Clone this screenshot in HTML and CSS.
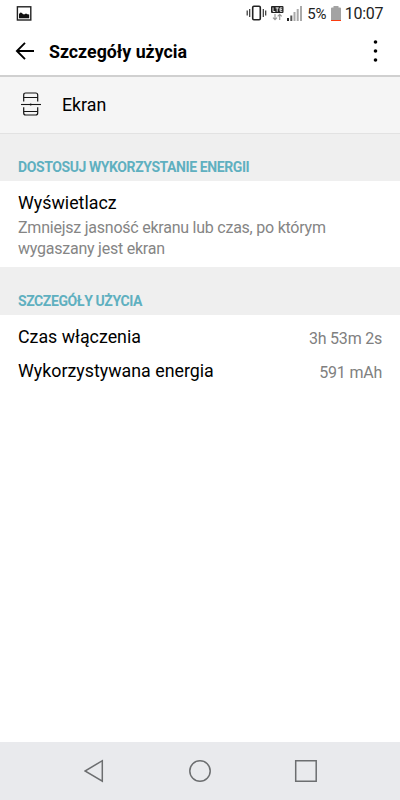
FILE: index.html
```html
<!DOCTYPE html>
<html lang="pl">
<head>
<meta charset="utf-8">
<title>Szczegóły użycia</title>
<link rel="stylesheet" href="styles.css">
</head>
<body>
<div class="screen">
  <div class="status">
    <svg class="picture" width="16" height="16" viewBox="0 0 16 16"><rect x="1.400" y=".8" width="13.400" height="13.200" fill="none" stroke="#222" stroke-width="1.400"/><path d="M3 12.200V8L4.500 6.500l1 .3L7 8l1 .5 2-1 1.500.8 1.700.3v3.600z" fill="#111"/></svg>
    <div class="indicators">
      <svg class="indicator-icons" width="58" height="20" viewBox="0 0 58 20">
        <rect x="6.700" y="5.200" width="7.600" height="13.600" rx="1.200" fill="none" stroke="#222" stroke-width="1.600"/>
        <path d="M1.200 9.500v5M3.700 8v8M17.300 8v8M19.700 9.500v5" stroke="#333" stroke-width="1.200"/>
        <rect x="25" y="5" width="12.500" height="7" rx="1" fill="#222"/>
        <path d="M27 6.500v4h2.300M29.600 6.900h3.200M31.200 6.700v4.100M36.300 6.900h-2.200v3.400h2.200M34.300 8.600h1.800" stroke="#fff" stroke-width=".9" fill="none"/>
        <path d="M29 13v5.500M27 16.700l2 2 2-2M33.700 19v-5.500M31.700 15.300l2-2 2 2" stroke="#999" stroke-width="1.200" fill="none"/>
        <path d="M41 17h2v3h-2z" fill="#222"/><path d="M44.300 14.500h2V20h-2z" fill="#555"/><path d="M47.500 11h2v9h-2z" fill="#aaa"/><path d="M50.700 8h2v12h-2z" fill="#aaa"/><path d="M54 5h2v15h-2z" fill="#aaa"/>
      </svg>
      <span class="percent">5%</span>
      <svg class="battery" width="10" height="16" viewBox="0 0 10 16"><path d="M0 2.500q0-1 1-1h1.500V0h5v1.500H9q1 0 1 1V14H0z" fill="#a3a3a3"/><path d="M0 14h10v1H0z" fill="#fa3c10"/></svg>
      <span class="clock">10:07</span>
    </div>
  </div>
  <header class="bar">
    <svg class="back" width="20" height="20" viewBox="0 0 20 20"><path d="M10 1.900 1.900 10 10 18.100M2 10h17" fill="none" stroke="#000" stroke-width="1.900"/></svg>
    <h1>Szczegóły użycia</h1>
    <svg class="more" width="5" height="24" viewBox="0 0 5 24"><circle cx="2.500" cy="3" r="1.800"/><circle cx="2.500" cy="12" r="1.800"/><circle cx="2.500" cy="21" r="1.800"/></svg>
  </header>
  <div class="component">
    <svg width="22" height="24" viewBox="0 0 22 24" fill="none" stroke="#151515" stroke-width="1.200"><path d="M3.700 9.500V3q0-2 2-2h10q2 0 2 2v6.500M3.700 15.300V21q0 2 2 2h10q2 0 2-2v-5.700"/><path d="M3.700 5.500h14M3.700 19.500h14" stroke-width="1"/><path d="M1 12.500h20" stroke-width="1.100"/><circle cx="10.700" cy="12.500" r="1" fill="#151515" stroke="none"/></svg>
    <span>Ekran</span>
  </div>
  <h2 class="section first"><span>DOSTOSUJ WYKORZYSTANIE ENERGII</span></h2>
  <div class="display">
    <div class="label">Wyświetlacz</div>
    <p>Zmniejsz jasność ekranu lub czas, po którym<br>wygaszany jest ekran</p>
  </div>
  <h2 class="section"><span>SZCZEGÓŁY UŻYCIA</span></h2>
  <div class="details">
    <div class="row"><span class="label">Czas włączenia</span><span class="value">3h 53m 2s</span></div>
    <div class="row"><span class="label">Wykorzystywana energia</span><span class="value">591 mAh</span></div>
  </div>
  <nav class="nav">
    <svg width="20" height="24" viewBox="0 0 20 24"><path d="M18.300 1.700v20.500L1 12z"/></svg>
    <svg width="24" height="24" viewBox="0 0 24 24"><circle cx="12" cy="12" r="10.200"/></svg>
    <svg width="24" height="24" viewBox="0 0 24 24"><path d="M1.700 1.700h20.500v20.500H1.700z"/></svg>
  </nav>
</div>
</body>
</html>
```
FILE: styles.css
```css
* { box-sizing: border-box; }
body { margin: 0; background: #fff; font-family: Roboto, sans-serif; color: #000; }
svg { display: block; flex: none; }
span { white-space: nowrap; }
.screen { width: 400px; height: 800px; display: flex; flex-direction: column; overflow: hidden; }
.status { height: 28px; padding: 0 17px 0 16px; display: flex; justify-content: space-between; align-items: flex-start; color: #222; }
.picture { margin-top: 6px; }
.indicators { display: flex; align-items: flex-start; line-height: 28px; }
.indicator-icons { margin-top: 1px; margin-right: 3px; }
.percent { font-size: 15px; letter-spacing: -.2px; width: 21px; margin-right: 3px; }
.battery { margin: 6px 3.500px 0 0; }
.clock { font-size: 16px; letter-spacing: -.25px; margin-right: -.25px; }
.bar { height: 49px; padding: 0 22px 0 15px; display: flex; align-items: center; border-bottom: 2px solid #d0d0d0; }
.back, .more { margin-bottom: 2px; }
.bar h1 { margin: 0 auto 0 14px; font-size: 17.800px; font-weight: 700; line-height: 24px; }
.component { height: 57px; padding: 0 20px 2px; display: flex; align-items: center; gap: 20px; background: #f5f5f5; border-bottom: 1px solid #e2e2e2; font-size: 17.800px; }
.section { margin: 0; height: 48px; padding: 24px 18px 0; background: #efefef; color: #5fb0c0; font-size: 14px; letter-spacing: -.41px; line-height: 20px; font-weight: 700; }
.section.first { height: 47px; padding-top: 23px; }
.display { height: 86px; padding: 10px 18px 0; }
.label { font-size: 17.820px; line-height: 24px; }
.display p { margin: 3px 0 0; font-size: 16px; letter-spacing: -.235px; line-height: 20.500px; color: #858585; }
.details { flex: 1; padding: 5px 18px; }
.row { height: 34px; display: flex; align-items: center; justify-content: space-between; }
.value { font-size: 16px; letter-spacing: -.22px; line-height: 24px; margin-top: 3px; color: #808080; }
.nav { height: 58px; padding: 0 82.500px 0 84px; display: flex; align-items: center; justify-content: space-between; background: #e9eaed; }
.nav svg { fill: none; stroke: #6c6e70; stroke-width: 1.500; }
.nav svg:nth-child(2) { margin-left: 2px; }
```
